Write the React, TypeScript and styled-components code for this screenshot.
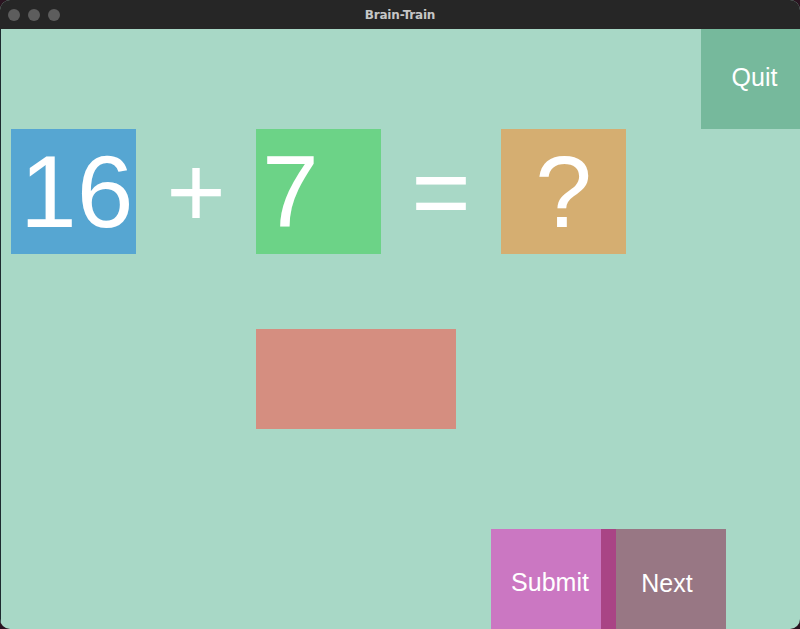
import React from "react";
import styled, { createGlobalStyle } from "styled-components";

const Global = createGlobalStyle`
  html, body { margin: 0; padding: 0; background: #2a1420; }
  body { width: 800px; height: 629px; overflow: hidden; font-family: "Liberation Sans", Arial, sans-serif; }
  * { box-sizing: border-box; }
`;

const Window = styled.div`
  width: 800px;
  height: 629px;
  display: flex;
  flex-direction: column;
  border-radius: 10px;
  overflow: hidden;
  background: #a8d8c6;
`;

const TitleBar = styled.div`
  height: 29px;
  flex: none;
  background: #262626;
  display: flex;
  align-items: center;
  position: relative;
  padding-left: 8px;
  gap: 8px;
`;

const Light = styled.span`
  width: 12px;
  height: 12px;
  border-radius: 50%;
  background: #5d5d5d;
`;

const Title = styled.div`
  position: absolute;
  left: 0;
  right: 0;
  top: 0;
  bottom: 0;
  display: flex;
  align-items: center;
  justify-content: center;
  color: #c6c6c6;
  font-family: "DejaVu Sans", "Liberation Sans", sans-serif;
  font-weight: bold;
  font-size: 12px;
  letter-spacing: -0.2px;
`;

const Content = styled.div`
  flex: 1;
  display: flex;
  flex-direction: column;
  border-left: 1px solid #1e2a30;
  color: #ffffff;
`;

const TopRow = styled.div`
  height: 100px;
  display: flex;
  justify-content: flex-end;
`;

const Button = styled.div<{ $bg: string; $w: number; $dx?: number; $dy?: number }>`
  width: ${(p) => p.$w}px;
  height: 100px;
  background: ${(p) => p.$bg};
  display: flex;
  align-items: center;
  justify-content: center;
  font-size: 25px;
  color: #ffffff;
  padding-left: ${(p) => Math.max(0, (p.$dx ?? 0) * 2)}px;
  padding-right: ${(p) => Math.max(0, -(p.$dx ?? 0) * 2)}px;
  padding-top: ${(p) => Math.max(0, (p.$dy ?? 0) * 2)}px;
  padding-bottom: ${(p) => Math.max(0, -(p.$dy ?? 0) * 2)}px;
`;

const EquationRow = styled.div`
  height: 125px;
  display: flex;
  padding-left: 10px;
`;

const Tile = styled.div<{ $bg: string; $pad?: number }>`
  width: 125px;
  height: 125px;
  background: ${(p) => p.$bg};
  display: flex;
  align-items: center;
  justify-content: ${(p) => (p.$pad === undefined ? "center" : "flex-start")};
  padding-left: ${(p) => p.$pad ?? 0}px;
  font-size: 102px;
  line-height: 1;
`;

const Operator = styled.div`
  width: 120px;
  height: 125px;
  display: flex;
  align-items: center;
  justify-content: center;
  font-size: 102px;
  line-height: 1;
`;

const AnswerRow = styled.div`
  margin-top: 75px;
  padding-left: 255px;
  height: 100px;
`;

const AnswerBox = styled.div`
  width: 200px;
  height: 100px;
  background: #d58e80;
`;

const BottomRow = styled.div`
  margin-top: auto;
  display: flex;
  padding-left: 490px;
`;

const Stripe = styled.div`
  width: 15px;
  height: 100px;
  background: #a94485;
`;

export default function App() {
  return (
    <>
      <Global />
      <Window>
        <TitleBar>
          <Light />
          <Light />
          <Light />
          <Title>Brain-Train</Title>
        </TitleBar>
        <Content>
          <TopRow>
            <Button $bg="#76b99c" $w={99} $dx={4} $dy={-2}>Quit</Button>
          </TopRow>
          <EquationRow>
            <Tile $bg="#56a6d2" $pad={9}>16</Tile>
            <Operator>+</Operator>
            <Tile $bg="#6cd387" $pad={6}>7</Tile>
            <Operator>=</Operator>
            <Tile $bg="#d5ae71">?</Tile>
          </EquationRow>
          <AnswerRow>
            <AnswerBox />
          </AnswerRow>
          <BottomRow>
            <Button $bg="#cb77c2" $w={110} $dx={4} $dy={3}>Submit</Button>
            <Stripe />
            <Button $bg="#987784" $w={110} $dx={-4} $dy={4}>Next</Button>
          </BottomRow>
        </Content>
      </Window>
    </>
  );
}
